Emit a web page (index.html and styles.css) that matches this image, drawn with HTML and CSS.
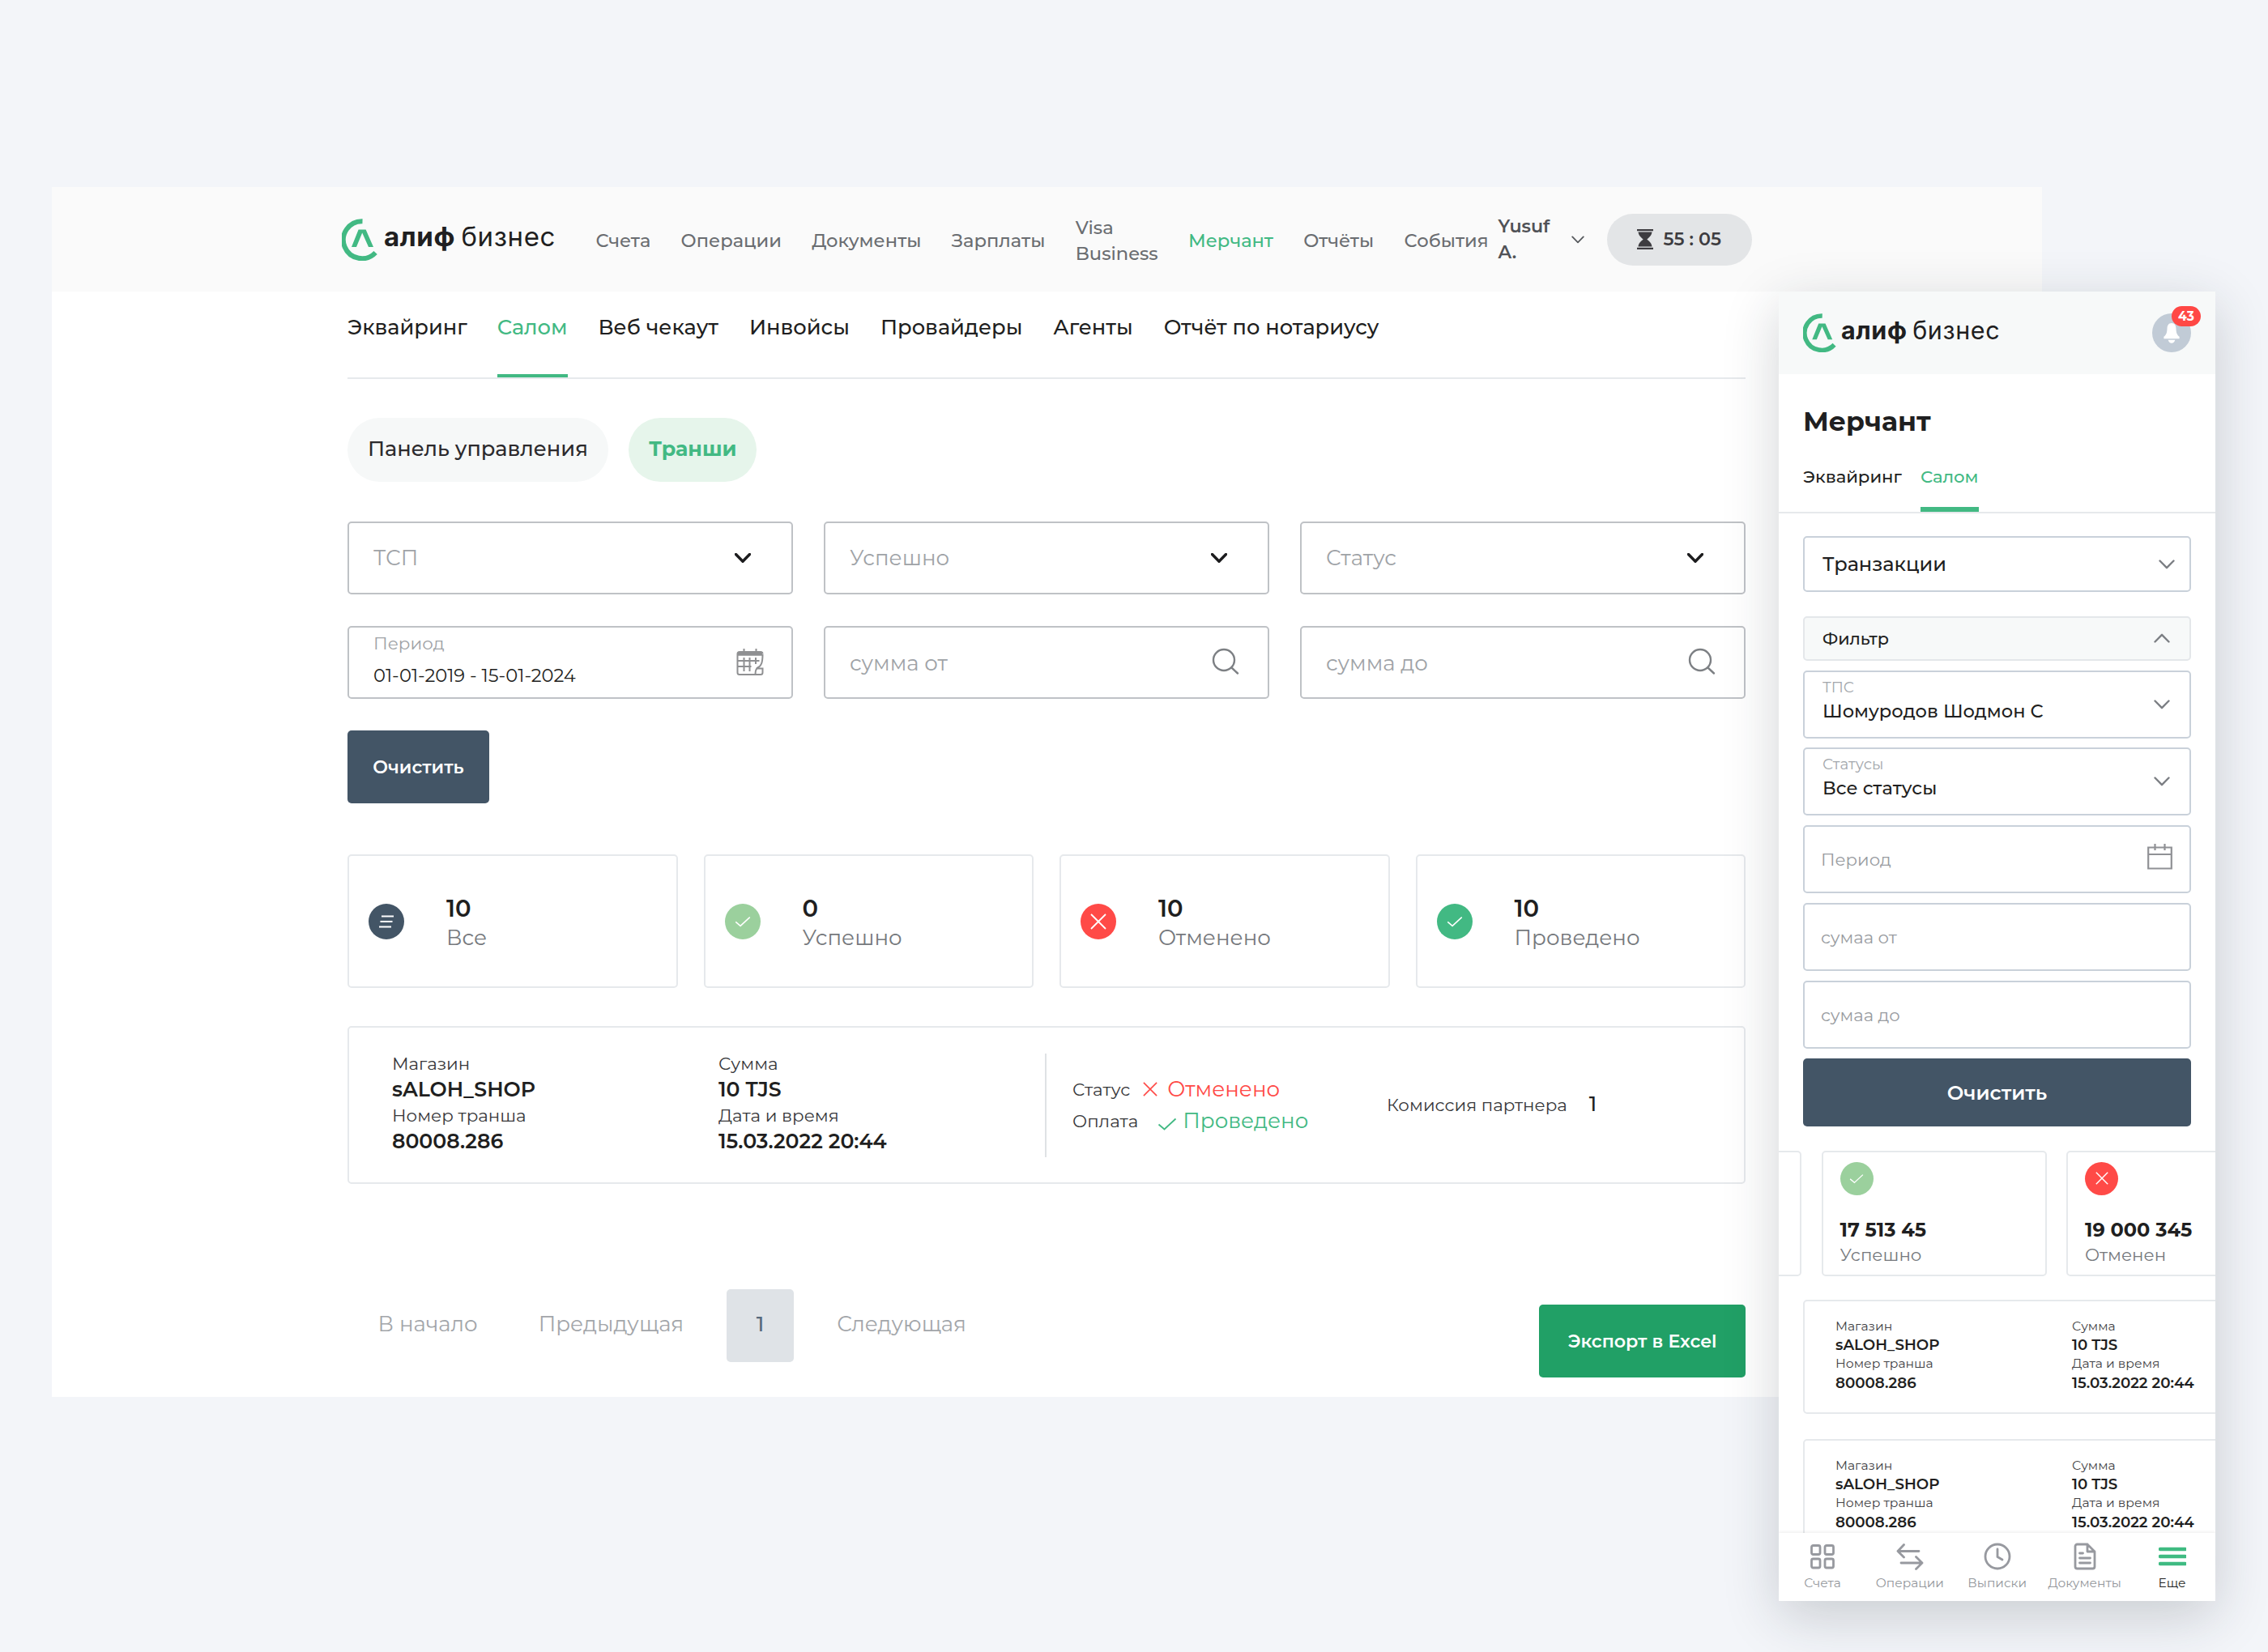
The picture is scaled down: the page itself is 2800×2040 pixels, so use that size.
FILE: index.html
```
<!DOCTYPE html>
<html lang="ru">
<head>
    <meta charset="UTF-8">
    <meta name="viewport" content="width=device-width, initial-scale=1.0">
    <title>алиф бизнес - Мерчант</title>
    <link rel="stylesheet" href="styles.css">
</head>
<body>
    <!-- Icons -->
    <svg class="sprite" aria-hidden="true">
        <symbol id="logo" viewBox="0 0 44 52">
            <path d="M25.500 3.200A23 23 0 1 0 41.600 42" fill="none" stroke="#42b983" stroke-width="6"/>
            <path d="M12 35 20.600 13.500h9L39 35h-6l-7.800-17.500L18 35z" fill="#42b983"/>
        </symbol>
        <symbol id="chevron" viewBox="0 0 20 12">
            <path d="M1.500 1.500 10 10.200l8.500-8.700" fill="none" stroke="currentColor" stroke-linecap="round" stroke-linejoin="round"/>
        </symbol>
        <symbol id="search" viewBox="0 0 34 34">
            <path d="M28 15a13 13 0 1 1-26 0 13 13 0 0 1 26 0zM24.500 24.500l7.500 7" fill="none" stroke="#7d8084" stroke-width="2.400" stroke-linecap="round"/>
        </symbol>
        <symbol id="check" viewBox="0 0 24 16">
            <path d="M1.500 8.500 8.500 14.500 22.500 1.500" fill="none" stroke="currentColor" stroke-width="1.800"/>
        </symbol>
        <symbol id="cross" viewBox="0 0 20 20">
            <path d="M1 1l18 18M19 1 1 19" fill="none" stroke="currentColor" stroke-width="1.800"/>
        </symbol>
    </svg>

    <div class="desktop">
        <header class="main-header">
            <div class="logo">
                <svg class="logo-icon"><use href="#logo"/></svg>
                <span class="logo-text"><b>алиф</b> бизнес</span>
            </div>
            <nav class="main-nav">
                <a>Счета</a>
                <a>Операции</a>
                <a>Документы</a>
                <a>Зарплаты</a>
                <a>Visa<br>Business</a>
                <a class="active">Мерчант</a>
                <a>Отчёты</a>
                <a>События</a>
            </nav>
            <div class="user">Yusuf<br>A.</div>
            <svg class="user-arrow"><use href="#chevron"/></svg>
            <div class="timer">
                <svg class="timer-icon" viewBox="0 0 20 25">
                    <path d="M0 0h20v2.200H0zM0 22.800h20V25H0zM1.500 3.400h17C18 8 15 10 12.300 12.500 15 15 18 17 18.500 21.600h-17C2 17 5 15 7.700 12.500 5 10 2 8 1.500 3.400z" fill="#3d3c40"/>
                </svg>
                55 : 05
            </div>
        </header>

        <main class="content">
            <nav class="tabs">
                <a>Эквайринг</a>
                <a class="active">Салом</a>
                <a>Веб чекаут</a>
                <a>Инвойсы</a>
                <a>Провайдеры</a>
                <a>Агенты</a>
                <a>Отчёт по нотариусу</a>
            </nav>

            <div class="pills">
                <a class="pill">Панель управления</a>
                <a class="pill active">Транши</a>
            </div>

            <div class="filters">
                <div class="field">
                    <span>ТСП</span>
                    <svg class="arrow"><use href="#chevron"/></svg>
                </div>
                <div class="field">
                    <span>Успешно</span>
                    <svg class="arrow"><use href="#chevron"/></svg>
                </div>
                <div class="field">
                    <span>Статус</span>
                    <svg class="arrow"><use href="#chevron"/></svg>
                </div>
                <div class="field">
                    <div class="period">
                        <div>Период</div>
                        <div class="period-value">01-01-2019 - 15-01-2024</div>
                    </div>
                    <svg class="field-icon" viewBox="0 0 34 34" fill="none" stroke="#8f9092" stroke-width="2">
                        <path d="M1.500 15h27M1.500 22h17M9.500 11v17M16.500 11v17M24 11v8"/>
                        <path d="M32.500 7c0 10-1.500 15-7 17-1.500 2-2 5-2 8H4a2.500 2.500 0 0 1-2.500-2.500V6.500A2.500 2.500 0 0 1 4 4h26a2.500 2.500 0 0 1 2.500 2.500M22 32h8a2.500 2.500 0 0 0 2.500-2.500V24.500h-7"/>
                        <path d="M2 6.500h30" stroke-width="4.500"/>
                        <path d="M9.500 0v5M24.500 0v5"/>
                    </svg>
                </div>
                <div class="field field-sum">
                    <span>сумма от</span>
                    <svg class="field-icon"><use href="#search"/></svg>
                </div>
                <div class="field field-sum">
                    <span>сумма до</span>
                    <svg class="field-icon"><use href="#search"/></svg>
                </div>
            </div>
            <button class="btn btn-dark">Очистить</button>

            <div class="stats">
                <div class="stat">
                    <span class="badge badge-dark">
                        <svg class="list-icon" viewBox="0 0 18 16"><path d="M3 1.500h15M1.500 8h15M0 14.500h15" stroke="#fff" stroke-width="1.800"/></svg>
                    </span>
                    <div><div class="stat-value">10</div><div class="stat-label">Все</div></div>
                </div>
                <div class="stat">
                    <span class="badge badge-light"><svg class="check-icon"><use href="#check"/></svg></span>
                    <div><div class="stat-value">0</div><div class="stat-label">Успешно</div></div>
                </div>
                <div class="stat">
                    <span class="badge badge-red"><svg class="cross-icon"><use href="#cross"/></svg></span>
                    <div><div class="stat-value">10</div><div class="stat-label">Отменено</div></div>
                </div>
                <div class="stat">
                    <span class="badge badge-green"><svg class="check-icon"><use href="#check"/></svg></span>
                    <div><div class="stat-value">10</div><div class="stat-label">Проведено</div></div>
                </div>
            </div>

            <div class="tranche">
                <div class="tranche-col">
                    <div>Магазин</div>
                    <div class="value">sALOH_SHOP</div>
                    <div>Номер транша</div>
                    <div class="value">80008.286</div>
                </div>
                <div class="tranche-col">
                    <div>Сумма</div>
                    <div class="value">10 TJS</div>
                    <div>Дата и время</div>
                    <div class="value">15.03.2022 20:44</div>
                </div>
                <div class="tranche-status">
                    <div class="status-row">
                        <span>Статус</span>
                        <svg class="status-cross"><use href="#cross"/></svg>
                        <span class="status-text red">Отменено</span>
                    </div>
                    <div class="status-row">
                        <span>Оплата</span>
                        <svg class="status-check"><use href="#check"/></svg>
                        <span class="status-text green">Проведено</span>
                    </div>
                </div>
                <div class="fee">Комиссия партнера<span class="fee-value">1</span></div>
            </div>

            <div class="bottom">
                <div class="pagination">
                    <a>В начало</a>
                    <a>Предыдущая</a>
                    <a class="current">1</a>
                    <a>Следующая</a>
                </div>
                <button class="btn btn-export">Экспорт в Excel</button>
            </div>
        </main>
    </div>

    <div class="mobile">
        <header class="m-header">
            <div class="logo">
                <svg class="logo-icon"><use href="#logo"/></svg>
                <span class="logo-text"><b>алиф</b> бизнес</span>
            </div>
            <div class="bell">
                <svg class="bell-icon" viewBox="0 0 20 26">
                    <path d="M10 0c4 0 5.500 3 5.700 7 .2 5 1 8 4.300 10.500V20H0v-2.500C3.300 15 4.100 12 4.300 7 4.500 3 6 0 10 0zM5.500 21.500h9c-.8 2.800-2.500 4.200-4.500 4.200s-3.700-1.400-4.500-4.200z" fill="#fff"/>
                </svg>
                <span class="bell-count">43</span>
            </div>
        </header>

        <div class="m-body">
            <h1 class="m-title">Мерчант</h1>
            <nav class="m-tabs">
                <a>Эквайринг</a>
                <a class="active">Салом</a>
            </nav>

            <div class="m-form">
                <div class="m-field m-select">
                    <span>Транзакции</span>
                    <svg class="m-arrow"><use href="#chevron"/></svg>
                </div>
                <div class="m-field m-filter">
                    <span>Фильтр</span>
                    <svg class="m-arrow up"><use href="#chevron"/></svg>
                </div>
                <div class="m-field">
                    <div class="m-pair">
                        <div class="m-label">ТПС</div>
                        <div>Шомуродов Шодмон С</div>
                    </div>
                    <svg class="m-arrow"><use href="#chevron"/></svg>
                </div>
                <div class="m-field">
                    <div class="m-pair">
                        <div class="m-label">Статусы</div>
                        <div>Все статусы</div>
                    </div>
                    <svg class="m-arrow"><use href="#chevron"/></svg>
                </div>
                <div class="m-field m-empty">
                    <span>Период</span>
                    <svg class="m-calendar" viewBox="0 0 31 32" fill="none" stroke="#909195" stroke-width="2.200">
                        <path d="M1.200 4.500h28.600v26H1.200zM1.200 13h28.600M9.500 0v8M21.500 0v8"/>
                    </svg>
                </div>
                <div class="m-field m-empty"><span>сумаа от</span></div>
                <div class="m-field m-empty"><span>сумаа до</span></div>
                <button class="btn btn-dark m-btn">Очистить</button>
            </div>

            <div class="m-cards">
                <div class="m-card"></div>
                <div class="m-card">
                    <span class="badge badge-light"><svg class="check-icon"><use href="#check"/></svg></span>
                    <div class="m-card-value">17 513 45</div>
                    <div class="m-card-label">Успешно</div>
                </div>
                <div class="m-card">
                    <span class="badge badge-red"><svg class="cross-icon"><use href="#cross"/></svg></span>
                    <div class="m-card-value">19 000 345</div>
                    <div class="m-card-label">Отменен</div>
                </div>
            </div>

            <div class="m-tranche">
                <div>
                    <div>Магазин</div>
                    <div class="value">sALOH_SHOP</div>
                    <div>Номер транша</div>
                    <div class="value">80008.286</div>
                </div>
                <div>
                    <div>Сумма</div>
                    <div class="value">10 TJS</div>
                    <div>Дата и время</div>
                    <div class="value">15.03.2022 20:44</div>
                </div>
            </div>
            <div class="m-tranche">
                <div>
                    <div>Магазин</div>
                    <div class="value">sALOH_SHOP</div>
                    <div>Номер транша</div>
                    <div class="value">80008.286</div>
                </div>
                <div>
                    <div>Сумма</div>
                    <div class="value">10 TJS</div>
                    <div>Дата и время</div>
                    <div class="value">15.03.2022 20:44</div>
                </div>
            </div>
        </div>

        <nav class="m-nav">
            <a>
                <svg viewBox="0 0 34 34"><rect x="3.500" y="3.500" width="10.500" height="11" rx="2"/><rect x="20" y="3.500" width="10.500" height="11" rx="2"/><rect x="3.500" y="20" width="10.500" height="11" rx="2"/><rect x="20" y="20" width="10.500" height="11" rx="2"/></svg>
                Счета
            </a>
            <a>
                <svg viewBox="0 0 34 34"><path d="M28 10.500H2M9.500 2.500 2 10.500l7.500 7.500M6 25h26M24.500 17.500 32 25l-7.500 7.500"/></svg>
                Операции
            </a>
            <a>
                <svg viewBox="0 0 34 34"><circle cx="17" cy="17" r="15"/><path d="M17 8v9.500l6 3.500"/></svg>
                Выписки
            </a>
            <a>
                <svg viewBox="0 0 34 34"><path d="M20 2H7.500A2.500 2.500 0 0 0 5 4.500v25A2.500 2.500 0 0 0 7.500 32h19a2.500 2.500 0 0 0 2.500-2.500V11zM20 2v9h9M10.500 13h4M10.500 19h13M10.500 25h13"/></svg>
                Документы
            </a>
            <a class="active">
                <svg viewBox="0 0 34 34"><path d="M2 8h30.500M2 17h30.500M2 26h30.500"/></svg>
                Еще
            </a>
        </nav>
    </div>
</body>
</html>
```

FILE: styles.css
```
/* Root Variables */
:root {
    --green: #42b983;
    --green-dark: #21a066;
    --red: #ff4a47;
    --dark: #435566;
    --text: #1f1f21;
    --text-muted: #76797d;
    --placeholder: #9fa3a7;
    --line: #e6e9ec;
}

/* Base Styles */
* {
    margin: 0;
    padding: 0;
    box-sizing: border-box;
}

body {
    position: relative;
    width: 2800px;
    height: 2040px;
    padding: 231px 0 0 64px;
    overflow: hidden;
    font-family: Montserrat, Inter, sans-serif;
    font-size: 25.7px;
    font-weight: 500;
    color: var(--text);
    background: #f3f5f9;
}

svg {
    flex-shrink: 0;
}

.sprite {
    display: none;
}

/* Desktop window */
.desktop {
    width: 2457px;
    height: 1494px;
    background: #fff;
}

.main-header {
    display: flex;
    align-items: center;
    height: 129px;
    padding-left: 358px;
    background: #fafafa;
}

.logo {
    display: flex;
    align-items: center;
    width: 313.5px;
}

.logo-icon {
    width: 44px;
    height: 52px;
    margin-right: 8px;
}

.logo-text {
    font-family: Inter, sans-serif;
    font-size: 33px;
    font-weight: 400;
    line-height: 40px;
    letter-spacing: 0.6px;
    white-space: nowrap;
    word-spacing: -2.5px;
    padding-bottom: 7px;
}

.main-nav {
    display: flex;
    align-items: center;
    gap: 37.3px;
    font-size: 22.6px;
    line-height: 32px;
    color: #6a6d71;
    padding-top: 2px;
}

.main-nav .active {
    color: var(--green);
}

.user {
    width: 90px;
    margin-left: 12px;
    font-size: 22.2px;
    font-weight: 600;
    line-height: 32px;
    color: #505257;
}

.user-arrow {
    width: 16px;
    height: 10px;
    color: #55585c;
    stroke-width: 2.2;
}

.timer {
    display: flex;
    align-items: center;
    gap: 13px;
    width: 179px;
    height: 64px;
    margin-left: 28px;
    padding-left: 37px;
    border-radius: 32px;
    background: #e3e5e7;
    font-size: 22.2px;
    font-weight: 600;
    color: #3d3c40;
}

.timer-icon {
    width: 20px;
    height: 25px;
}

.content {
    width: 2091px;
    padding-left: 365px;
}

/* Tabs */
.tabs {
    display: flex;
    gap: 37.9px;
    height: 108px;
    border-bottom: 2px solid var(--line);
    line-height: 32px;
}

.tabs a {
    height: 106px;
    padding-top: 28px;
    border-bottom: 4px solid transparent;
}

.tabs a:first-child {
    margin-right: -1px;
}

.tabs .active {
    color: var(--green);
    border-color: var(--green);
}

.pills {
    display: flex;
    gap: 25px;
    margin: 48px 0 49px;
}

.pill {
    height: 79px;
    padding: 0 25px;
    border-radius: 40px;
    background: #f6f8f8;
    line-height: 76px;
    color: #2c2a2d;
}

.pill.active {
    background: #e6f5eb;
    font-size: 25.3px;
    font-weight: 700;
    color: var(--green);
}

/* Filters */
.filters {
    display: grid;
    grid-template-columns: repeat(3, 550px);
    gap: 39px 38px;
    margin-bottom: 39px;
}

.field {
    display: flex;
    align-items: center;
    justify-content: space-between;
    height: 90px;
    padding: 0 34px 0 30px;
    border: 2px solid #bfc2c6;
    border-radius: 5px;
    font-size: 26.1px;
    font-weight: 400;
    color: var(--placeholder);
}

.field span {
    padding-bottom: 1px;
}

.field-sum {
    padding: 3px 35px 0 30px;
}

.field-sum .field-icon {
    margin-top: -6px;
}

.arrow {
    width: 20px;
    height: 12px;
    margin-right: 16px;
    color: #1c1c1e;
    stroke-width: 3.4;
}

.field-icon {
    width: 34px;
    height: 34px;
}

.period {
    height: 88px;
    font-size: 21.4px;
    line-height: 40px;
}

.period-value {
    font-size: 22.6px;
    color: var(--text);
}

/* Buttons */
.btn {
    height: 90px;
    border: none;
    border-radius: 5px;
    font-family: inherit;
    font-size: 22.2px;
    font-weight: 600;
    color: #fff;
}

.btn-dark {
    display: block;
    width: 175px;
    background: var(--dark);
}

.btn-export {
    width: 255px;
    margin-top: 19px;
    background: var(--green-dark);
}

/* Stats */
.stats {
    display: grid;
    grid-template-columns: repeat(4, 1fr);
    gap: 32px;
    margin: 63px 0 47px;
}

.stat {
    display: flex;
    align-items: center;
    gap: 52px;
    height: 165px;
    padding-left: 24px;
    border: 2px solid var(--line);
    border-radius: 5px;
    line-height: 36px;
}

.stat > div {
    padding-top: 4px;
}

.stat-value {
    font-size: 29px;
    font-weight: 600;
}

.stat-label {
    font-size: 26.1px;
    font-weight: 400;
    color: var(--text-muted);
}

.badge {
    display: flex;
    align-items: center;
    justify-content: center;
    width: 44px;
    height: 44px;
    border-radius: 50%;
    color: #fff;
}

.badge-dark { background: var(--dark); }
.badge-light { background: #9bd09d; }
.badge-red { background: var(--red); }
.badge-green { background: var(--green); }

.list-icon {
    width: 18px;
    height: 16px;
}

.check-icon {
    width: 20px;
    height: 14px;
    margin-top: 1px;
}

.cross-icon {
    width: 20px;
    height: 20px;
}

/* Tranche */
.tranche {
    display: flex;
    align-items: center;
    height: 195px;
    padding-left: 53px;
    border: 2px solid var(--line);
    border-radius: 5px;
    font-size: 21.4px;
    font-weight: 400;
    line-height: 32px;
    color: #38383b;
}

.tranche-col {
    width: 403px;
    margin-top: -7px;
}

.value {
    font-size: 25.2px;
    font-weight: 600;
    color: var(--text);
}

.tranche-status {
    display: flex;
    flex-direction: column;
    justify-content: center;
    width: 422px;
    height: 128px;
    padding-left: 32px;
    border-left: 2px solid #dfe2e5;
}

.status-row {
    display: flex;
    align-items: center;
    height: 38.5px;
}

.status-text {
    font-size: 26.1px;
}

.status-cross {
    width: 18px;
    height: 18px;
    margin: 0 12px 0 16px;
    color: var(--red);
}

.status-check {
    width: 24px;
    height: 16px;
    margin: 9px 7px 0 24px;
    color: var(--green);
}

.red { color: var(--red); }
.green { color: var(--green); }

.fee {
    margin-top: -2px;
}

.fee-value {
    margin-left: 27px;
    font-size: 25.7px;
    font-weight: 500;
    color: var(--text);
}

/* Pagination */
.bottom {
    display: flex;
    justify-content: space-between;
    margin-top: 130px;
}

.pagination {
    display: flex;
    font-size: 26.1px;
    font-weight: 400;
    line-height: 87px;
    color: #a3a6aa;
}

.pagination a {
    padding: 0 37.5px;
}

.pagination .current {
    width: 83px;
    height: 90px;
    margin: 0 15.5px;
    padding: 0;
    border-radius: 5px;
    background: #dfe3e7;
    font-weight: 500;
    color: #56697b;
    text-align: center;
}

/* Mobile window */
.mobile {
    position: absolute;
    left: 2196px;
    top: 360px;
    display: flex;
    flex-direction: column;
    width: 539px;
    height: 1617px;
    overflow: hidden;
    background: #fff;
    box-shadow: 0 18px 64px rgba(30, 40, 50, 0.2);
}

.m-header {
    display: flex;
    flex-shrink: 0;
    align-items: center;
    justify-content: space-between;
    height: 102px;
    padding: 0 30px;
    background: #f7f9f9;
}

.m-header .logo-icon {
    width: 41px;
    height: 48px;
    margin-right: 6px;
}

.m-header .logo-text {
    font-size: 30.5px;
    padding-bottom: 7px;
}

.bell {
    position: relative;
    display: flex;
    align-items: center;
    justify-content: center;
    width: 48px;
    height: 48px;
    border-radius: 50%;
    background: #c1cbd6;
}

.bell-icon {
    width: 20px;
    height: 25px;
}

.bell-count {
    position: absolute;
    top: -9px;
    left: 24px;
    width: 36px;
    height: 25px;
    border-radius: 12.5px;
    background: #ff4845;
    font-size: 15.5px;
    font-weight: 700;
    line-height: 25px;
    color: #fff;
    text-align: center;
}

.m-body {
    flex: 1;
    min-height: 0;
    padding-top: 38px;
    overflow: hidden;
}

.m-title {
    padding-left: 30px;
    font-size: 33.1px;
    line-height: 40px;
}

.m-tabs {
    display: flex;
    gap: 23px;
    height: 94px;
    padding-left: 30px;
    border-bottom: 2px solid var(--line);
    font-size: 21.2px;
    line-height: 30px;
}

.m-tabs a {
    height: 92px;
    padding-top: 33px;
    border-bottom: 6px solid transparent;
}

.m-tabs .active {
    border-color: var(--green);
    color: var(--green);
}

.m-form {
    display: grid;
    gap: 11.8px;
    padding: 28px 30px 0;
}

.m-field {
    display: flex;
    align-items: center;
    justify-content: space-between;
    height: 84px;
    padding: 0 24px 0 22px;
    border: 2px solid #c9d1da;
    border-radius: 5px;
    font-size: 22.5px;
}

.m-select {
    height: 69px;
    margin-bottom: 18px;
    padding: 0 18px 0 22px;
    font-size: 24.1px;
}

.m-filter {
    height: 55px;
    border-color: #e4e7ea;
    background: #f7f9f9;
    font-size: 20.7px;
}

.m-pair {
    height: 80px;
    padding-top: 4px;
    line-height: 29px;
}

.m-label {
    font-size: 18.3px;
    font-weight: 400;
    line-height: 30px;
    color: #a3a7ac;
}

.m-empty {
    padding: 0 21px 0 20px;
    font-size: 21.2px;
    font-weight: 400;
    color: #999ca1;
}

.m-arrow {
    width: 20px;
    height: 12px;
    color: #7c7f84;
    stroke-width: 2.4;
}

.m-arrow.up {
    transform: rotate(180deg);
}

.m-calendar {
    width: 31px;
    height: 32px;
    margin-top: -7px;
}

.m-btn {
    width: 100%;
    height: 84px;
    font-size: 24.4px;
}

.m-cards {
    display: flex;
    gap: 24.5px;
    margin: 30px 0 0 -250px;
}

.m-card {
    flex: none;
    width: 278px;
    height: 155px;
    padding: 12px 0 0 21px;
    border: 2px solid var(--line);
    border-radius: 5px;
    line-height: 31px;
}

.m-card .badge {
    width: 41px;
    height: 41px;
    margin-bottom: 27px;
}

.m-card .check-icon {
    width: 18px;
    height: 13px;
}

.m-card .cross-icon {
    width: 16px;
    height: 16px;
}

.m-card-value {
    font-size: 24px;
    font-weight: 700;
    white-space: nowrap;
}

.m-card-label {
    font-size: 21.4px;
    font-weight: 400;
    color: var(--text-muted);
}

.m-tranche {
    display: grid;
    grid-template-columns: 292px 292px;
    width: 900px;
    height: 141px;
    margin: 29px 0 31px 30px;
    padding: 19.5px 0 0 38px;
    border: 2px solid var(--line);
    border-radius: 5px;
    font-size: 15.6px;
    font-weight: 400;
    line-height: 23.2px;
    color: #434346;
}

.m-tranche .value {
    font-size: 18.3px;
}

/* Bottom nav */
.m-nav {
    z-index: 1;
    display: grid;
    flex-shrink: 0;
    grid-template-columns: repeat(5, 107.9px);
    height: 84px;
    padding-top: 12px;
    background: #fff;
    box-shadow: 0 -1px 4px rgba(0, 0, 0, 0.08);
    font-size: 15.4px;
    font-weight: 400;
    line-height: 22px;
    color: #94979c;
}

.m-nav a {
    display: flex;
    flex-direction: column;
    align-items: center;
    gap: 5px;
}

.m-nav svg {
    width: 34px;
    height: 34px;
    fill: none;
    stroke: #97999f;
    stroke-width: 2.8;
    stroke-linecap: round;
    stroke-linejoin: round;
}

.m-nav .active {
    color: var(--text);
}

.m-nav .active svg {
    stroke: #3fbb82;
    stroke-width: 4.6;
}
```
